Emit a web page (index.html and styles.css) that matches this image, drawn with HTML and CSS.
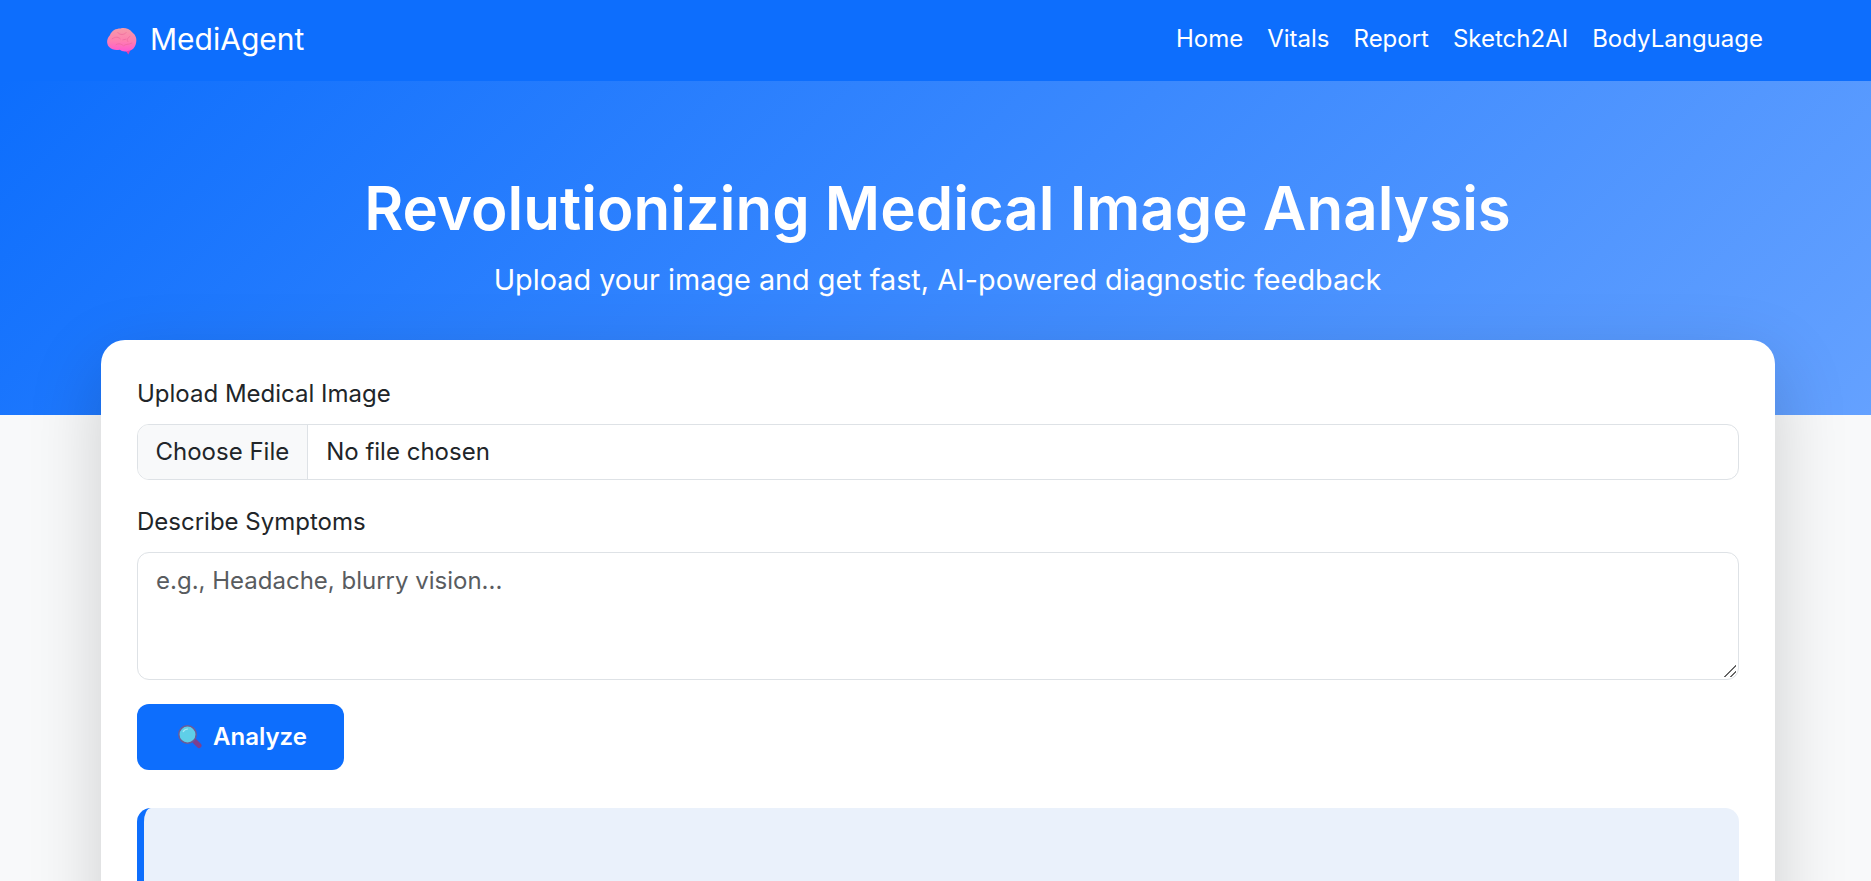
FILE: index.html
```html
<!DOCTYPE html>
<html lang="en">
<head>
<meta charset="utf-8">
<title>MediAgent</title>
<link rel="stylesheet" href="styles.css">
</head>
<body>
<nav class="navbar">
  <a class="brand" href="#">
    <svg class="brand-icon" viewBox="0 0 32 28" aria-hidden="true">
      <defs><linearGradient id="bg" x1="0" y1="0" x2="0" y2="1"><stop offset="0" stop-color="#f59aa8"/><stop offset=".55" stop-color="#ff7fb0"/><stop offset="1" stop-color="#ff58d0"/></linearGradient></defs>
      <path d="M19 22 L23 28 L26 22Z" fill="#e83fa8"/>
      <path d="M4 8 C6 3 10 1 15 1 C19 0 24 1 27 5 C31 8 32 12 31 16 C30 21 27 24 23 24 C19 26 16 24 14 23 C10 24 6 23 3 20 C0 16 1 11 4 8Z" fill="url(#bg)"/>
      <path d="M6 12 C10 9 13 10 15 12 M12 5 C14 8 19 8 21 5 M25 9 C22 11 21 13 23 15 M10 18 C13 16 16 17 18 19 C20 17 23 18 27 16 M17 13 L21 12" fill="none" stroke="#ee6c9c" stroke-width=".8"/>
    </svg>
    <span class="brand-name">MediAgent</span>
  </a>
  <ul class="nav-links">
    <li><a href="#">Home</a></li>
    <li><a href="#">Vitals</a></li>
    <li><a href="#">Report</a></li>
    <li><a href="#">Sketch2AI</a></li>
    <li><a href="#">BodyLanguage</a></li>
  </ul>
</nav>
<header class="hero">
  <h1>Revolutionizing Medical Image Analysis</h1>
  <p>Upload your image and get fast, AI-powered diagnostic feedback</p>
</header>
<main class="card">
  <form class="form">
    <label class="label" for="image">Upload Medical Image</label>
    <input class="file-input" id="image" type="file">
    <label class="label" for="symptoms">Describe Symptoms</label>
    <textarea class="textarea" id="symptoms" placeholder="e.g., Headache, blurry vision..."></textarea>
    <button class="analyze" type="button">
      <svg class="analyze-icon" viewBox="0 0 24 24" aria-hidden="true">
        <path d="M17 16.500 L21 20.500" fill="none" stroke="#7d3f8f" stroke-width="5" stroke-linecap="round"/>
        <circle cx="9.500" cy="9.500" r="8.700" fill="#5fcfe8" stroke="#6d5a96" stroke-width="1.500"/>
        <path d="M5 7 C6 5 8 4 10 4" fill="none" stroke="#a5e8f5" stroke-width="1.200"/>
      </svg>
      <span>Analyze</span>
    </button>
  </form>
  <section class="result"></section>
</main>
</body>
</html>
```
FILE: styles.css
```css
* { box-sizing: border-box; }
html, body { margin: 0; padding: 0; }
body {
  background: #f8f9fa;
  color: #212529;
  font-family: Inter, "Liberation Sans", sans-serif;
  font-size: 24px;
  line-height: 1.5;
}
.navbar {
  height: 81px;
  background: #0d6efd;
  display: flex;
  align-items: center;
  justify-content: space-between;
  padding: 0 108px 0 106px;
}
.brand {
  display: flex;
  align-items: center;
  gap: 13px;
  color: #fff;
  font-size: 30px;
  font-weight: 400;
  text-decoration: none;
}
.brand-name { margin-bottom: 2px; }
.brand-icon { width: 31px; height: 28px; }
.nav-links {
  display: flex;
  gap: 24px;
  list-style: none;
  margin: 0 0 4px;
  padding: 0;
}
.nav-links a {
  color: #fff;
  font-size: 24px;
  text-decoration: none;
}
.hero {
  height: 334px;
  background: linear-gradient(135deg, #0d6efd, #64a1ff);
  color: #fff;
  text-align: center;
  padding: 91px 0 0 4px;
}
.hero h1 {
  margin: 0;
  font-size: 60px;
  font-weight: 600;
  line-height: 1.2;
}
.hero p {
  margin: 14px 0 0;
  font-size: 28.8px;
}
.card {
  width: 1674px;
  margin: -75px 0 0 101px;
  position: relative;
  background: #fff;
  border-radius: 24px;
  box-shadow: 0 24px 72px rgba(0, 0, 0, .175);
  padding: 36px;
}
.form { display: flex; flex-direction: column; align-items: flex-start; }
.label {
  font-size: 24px;
  font-weight: 400;
  margin-bottom: 12px;
}
.file-input {
  width: 100%;
  height: 56px;
  border: 1px solid #dee2e6;
  border-radius: 12px;
  background: #fff;
  color: #212529;
  font: inherit;
  overflow: hidden;
  margin-bottom: 24px;
}
.file-input::file-selector-button {
  height: 100%;
  padding: 0 18px 0 17.500px;
  margin: 0 18px 0 0;
  border: 0;
  border-right: 1px solid #dee2e6;
  background: #f8f9fa;
  color: #212529;
  font: inherit;
}
.textarea {
  width: 100%;
  height: 128px;
  border: 1px solid #dee2e6;
  border-radius: 12px;
  padding: 10px 18px;
  background: #fff;
  color: #212529;
  font: inherit;
  margin-bottom: 24px;
  outline: 0;
}
.textarea::placeholder { color: #595c5f; opacity: 1; }
.textarea::-webkit-resizer {
  background: linear-gradient(135deg, transparent 52%, #666 52% 60%, transparent 60% 75%, #666 75% 83%, transparent 83%) no-repeat 0 0 / 13px 13px;
}
.analyze {
  display: flex;
  align-items: center;
  justify-content: center;
  gap: 11px;
  width: 207px;
  height: 66px;
  padding: 0 0 0 4px;
  background: #0d6efd;
  border: 0;
  border-radius: 12px;
  color: #fff;
  font: inherit;
  font-weight: 600;
}
.analyze-icon { width: 24px; height: 24px; }
.result {
  margin-top: 38px;
  height: 300px;
  background: #eaf1fb;
  border-left: 7px solid #0d6efd;
  border-radius: 14px;
}
```
